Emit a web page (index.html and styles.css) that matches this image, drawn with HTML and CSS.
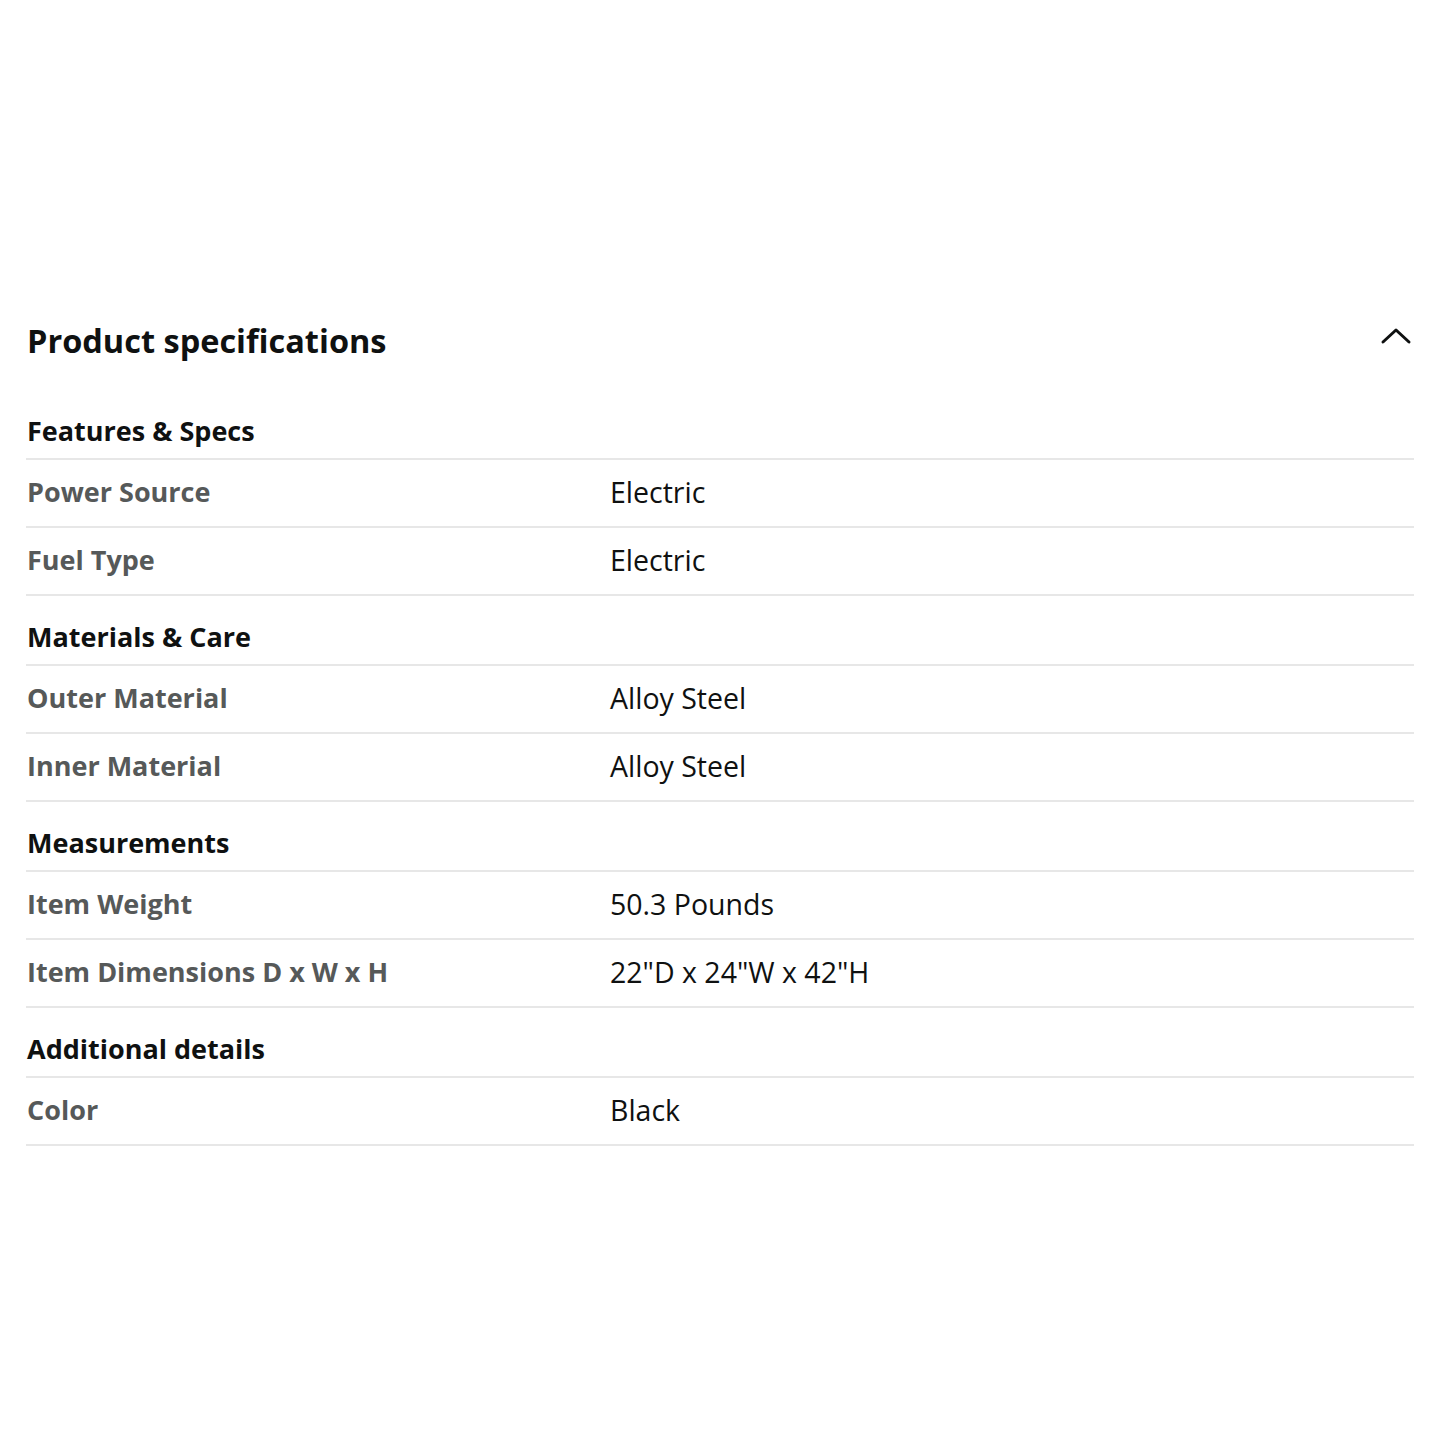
FILE: index.html
```html
<!DOCTYPE html>
<html>
<head>
<meta charset="utf-8">
<link rel="stylesheet" href="styles.css">
</head>
<body>
<div class="page">
  <div class="title-row">
    <h2 class="title">Product specifications</h2>
    <svg class="chev" width="32" height="20" viewBox="0 0 32 20"><path d="M3 16 L16 4 L29 16" fill="none" stroke="#0f1111" stroke-width="3" stroke-linecap="round" stroke-linejoin="round"/></svg>
  </div>
  <div class="section">Features &amp; Specs</div>
  <div class="row"><div class="label">Power Source</div><div class="value">Electric</div></div>
  <div class="row"><div class="label">Fuel Type</div><div class="value">Electric</div></div>
  <div class="section">Materials &amp; Care</div>
  <div class="row"><div class="label">Outer Material</div><div class="value">Alloy Steel</div></div>
  <div class="row"><div class="label">Inner Material</div><div class="value">Alloy Steel</div></div>
  <div class="section">Measurements</div>
  <div class="row"><div class="label">Item Weight</div><div class="value">50.3 Pounds</div></div>
  <div class="row"><div class="label">Item Dimensions D x W x H</div><div class="value">22"D x 24"W x 42"H</div></div>
  <div class="section">Additional details</div>
  <div class="row"><div class="label">Color</div><div class="value">Black</div></div>
</div>
</body>
</html>
```
FILE: styles.css
```css
html, body { margin: 0; padding: 0; background: #fff; }
body { font-family: "Open Sans", "Noto Sans", sans-serif; color: #0f1111; }
.page { padding: 300px 26px 0 26px; }
.title-row { display: flex; align-items: center; justify-content: space-between; height: 90px; padding-bottom: 10px; box-sizing: border-box; }
.title { margin: 0 0 0 1px; font-size: 32.5px; font-weight: 700; }
.chev { margin-right: 2px; margin-top: -8px; }
.section { height: 70px; border-bottom: 2px solid #e7e7e7; display: flex; align-items: center; padding-left: 1px; padding-top: 12px; box-sizing: border-box; font-size: 27px; font-weight: 700; }
.row { height: 68px; border-bottom: 2px solid #e7e7e7; display: grid; grid-template-columns: 583px 1fr; align-items: center; box-sizing: border-box; padding-left: 1px; padding-bottom: 3px; font-size: 27px; }
.label { font-weight: 700; color: #565959; }
.value { color: #0f1111; font-size: 28.5px; }
```
